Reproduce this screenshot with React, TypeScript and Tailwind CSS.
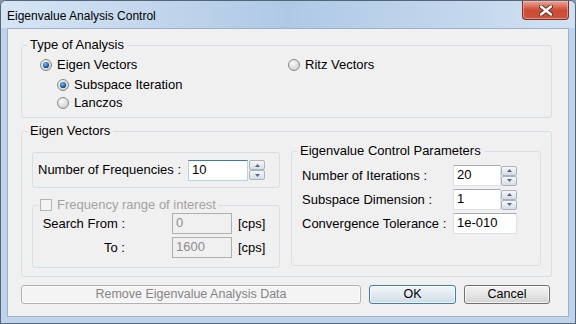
import React from "react";

const ui = "font-['Liberation_Sans',Arial,sans-serif]";

function Radio({ checked }: { checked?: boolean }) {
  return (
    <svg width="12" height="12" viewBox="0 0 12 12" className="shrink-0">
      <defs>
        <radialGradient id="rbg" cx="0.4" cy="0.35" r="0.75">
          <stop offset="0" stopColor="#fafafa" />
          <stop offset="1" stopColor="#c9c9c9" />
        </radialGradient>
        <radialGradient id="rdot" cx="0.4" cy="0.35" r="0.7">
          <stop offset="0" stopColor="#6cc0f5" />
          <stop offset="1" stopColor="#0b3a7e" />
        </radialGradient>
      </defs>
      <circle cx="6" cy="6" r="5.5" fill="url(#rbg)" stroke="#8a8a8a" />
      {checked && <circle cx="6" cy="6" r="3.1" fill="url(#rdot)" />}
    </svg>
  );
}

function RadioItem({ label, checked }: { label: string; checked?: boolean }) {
  return (
    <div className="flex items-center gap-[5px]">
      <Radio checked={checked} />
      <span>{label}</span>
    </div>
  );
}

function Spin() {
  return (
    <div className="flex flex-col w-[16px] h-[20px]">
      {[0, 1].map((i) => (
        <div
          key={i}
          className="flex-1 flex items-center justify-center border border-[#aab4c0] rounded-[2px] bg-gradient-to-b from-[#f7f7f7] to-[#d9dde2]"
        >
          <svg width="5" height="3" viewBox="0 0 5 3">
            <path d={i === 0 ? "M0 3L2.5 0L5 3Z" : "M0 0L2.5 3L5 0Z"} fill="#4a6894" />
          </svg>
        </div>
      ))}
    </div>
  );
}

type BoxProps = { value: string; w: string; focus?: boolean; disabled?: boolean };

function TextBox({ value, w, focus, disabled }: BoxProps) {
  let cls = "border border-t-[#a9adb4] border-[#dde1e7] bg-white text-black";
  if (focus) cls = "border border-t-[#3d7bad] border-[#b7d3ea] bg-white text-black";
  if (disabled) cls = "border border-[#b0b0b0] bg-[#f0f0f0] text-[#8e8e8e]";
  return (
    <div className={`${w} h-[21px] pl-[3px] pt-[1px] leading-[15px] ${cls}`}>{value}</div>
  );
}

function Button({ label, w, kind }: { label: string; w: string; kind: "normal" | "default" | "disabled" }) {
  const styles = {
    normal: "border-[#707070] bg-gradient-to-b from-[#f3f3f3] via-[#e6e6e6] to-[#d2d2d2] text-black",
    default: "border-[#3c7fb1] bg-gradient-to-b from-[#f2f6f9] via-[#e2ebf1] to-[#cfdbe4] text-black",
    disabled: "border-[#adb2b5] bg-[#f4f4f4] text-[#858585]",
  }[kind];
  return (
    <div
      className={`${w} h-[19px] flex items-center justify-center rounded-[3px] border text-[12.5px] shadow-[inset_0_0_0_1px_rgba(255,255,255,0.7)] ${styles}`}
    >
      {label}
    </div>
  );
}

export default function App() {
  return (
    <div className={`w-[576px] h-[324px] bg-[#8495a8] ${ui}`}>
      <div className="w-[576px] h-[324px] rounded-t-[6px] border border-[#55667a] bg-[#bfd4eb] flex flex-col overflow-hidden">
        {/* title bar */}
        <div className="h-[27px] flex items-start bg-gradient-to-r from-[#d6e5f4] via-[#afc9e5] to-[#d0e1f2]">
          <div className="pl-[6px] pt-[8px] text-[12px] leading-[14px] text-black flex-1">
            Eigenvalue Analysis Control
          </div>
          <div className="mr-[6px] w-[47px] h-[19px] rounded-b-[4px] border border-t-0 border-[#7d2f25] bg-gradient-to-b from-[#e9a597] via-[#cf4a33] to-[#c8553d] flex items-center justify-center shadow-[inset_0_0_0_1px_rgba(255,200,190,0.5)]">
            <svg width="14" height="11" viewBox="0 0 14 11">
              <path d="M2 1.5L12 9.5M12 1.5L2 9.5" stroke="#5a2a22" strokeWidth="4.2" strokeLinecap="round" />
              <path d="M2 1.5L12 9.5M12 1.5L2 9.5" stroke="#ffffff" strokeWidth="2.4" strokeLinecap="round" />
            </svg>
          </div>
        </div>

        {/* client area */}
        <div className="mx-[6px] w-[562px] h-[289px] border border-[#9eb3ca] bg-[#f0f0f0] text-[13px] text-black pl-[13px] pt-[9px] flex flex-col">
          <fieldset className="w-[531px] h-[80px] border border-[#d5dfe5] rounded-[3px]">
            <legend className="ml-[5px] px-[3px] leading-[14px]">Type of Analysis</legend>
            <div className="pl-[18px] pt-[3px]">
              <div className="h-[20px] flex items-center">
                <div className="w-[248px]">
                  <RadioItem label="Eigen Vectors" checked />
                </div>
                <RadioItem label="Ritz Vectors" />
              </div>
              <div className="h-[19px] flex items-center pl-[17px]">
                <RadioItem label="Subspace Iteration" checked />
              </div>
              <div className="h-[18px] flex items-center pl-[17px]">
                <RadioItem label="Lanczos" />
              </div>
            </div>
          </fieldset>

          <fieldset className="mt-[6px] w-[531px] h-[153px] border border-[#d5dfe5] rounded-[3px]">
            <legend className="ml-[5px] px-[3px] leading-[14px]">Eigen Vectors</legend>
            <div className="flex items-start pl-[10px] pt-[5px] gap-[11px]">
              {/* left column */}
              <div className="w-[248px] mt-[9px] flex flex-col">
                <div className="h-[36px] border border-[#d5dfe5] rounded-[3px] flex items-center pl-[5px]">
                  <span className="w-[150px]">Number of Frequencies :</span>
                  <TextBox value="10" w="w-[60px]" focus />
                  <div className="ml-[1px]">
                    <Spin />
                  </div>
                </div>

                <fieldset className="mt-[9px] h-[71px] border border-[#d5dfe5] rounded-[3px]">
                  <legend className="ml-[5px] px-[2px] h-[16px] flex items-center gap-[5px] text-[#a3a3a3]">
                    <span className="w-[12px] h-[12px] border border-[#b5b5b5] bg-[#f4f4f4] inline-block" />
                    <span>Frequency range of interest</span>
                  </legend>
                  <div className="flex flex-col gap-[3px]">
                    <div className="flex items-center h-[21px]">
                      <span className="w-[92px] text-right">Search From :</span>
                      <div className="ml-[47px]">
                        <TextBox value="0" w="w-[60px]" disabled />
                      </div>
                      <span className="ml-[6px]">[cps]</span>
                    </div>
                    <div className="flex items-center h-[21px]">
                      <span className="w-[92px] text-right">To :</span>
                      <div className="ml-[47px]">
                        <TextBox value="1600" w="w-[60px]" disabled />
                      </div>
                      <span className="ml-[6px]">[cps]</span>
                    </div>
                  </div>
                </fieldset>
              </div>

              {/* right column */}
              <fieldset className="w-[250px] h-[123px] border border-[#d5dfe5] rounded-[3px]">
                <legend className="ml-[5px] px-[3px] h-[16px] leading-[16px]">
                  Eigenvalue Control Parameters
                </legend>
                <div className="pl-[10px] pt-[6px] flex flex-col gap-[3px]">
                  <div className="flex items-center h-[21px]">
                    <span className="w-[151px]">Number of Iterations :</span>
                    <TextBox value="20" w="w-[48px]" />
                    <Spin />
                  </div>
                  <div className="flex items-center h-[21px]">
                    <span className="w-[151px]">Subspace Dimension :</span>
                    <TextBox value="1" w="w-[48px]" />
                    <Spin />
                  </div>
                  <div className="flex items-center h-[21px]">
                    <span className="w-[151px]">Convergence Tolerance :</span>
                    <TextBox value="1e-010" w="w-[64px]" />
                  </div>
                </div>
              </fieldset>
            </div>
          </fieldset>

          <div className="mt-[8px] flex gap-[8px]">
            <Button label="Remove Eigenvalue Analysis Data" w="w-[340px]" kind="disabled" />
            <Button label="OK" w="w-[87px]" kind="default" />
            <Button label="Cancel" w="w-[86px]" kind="normal" />
          </div>
        </div>
      </div>
    </div>
  );
}
